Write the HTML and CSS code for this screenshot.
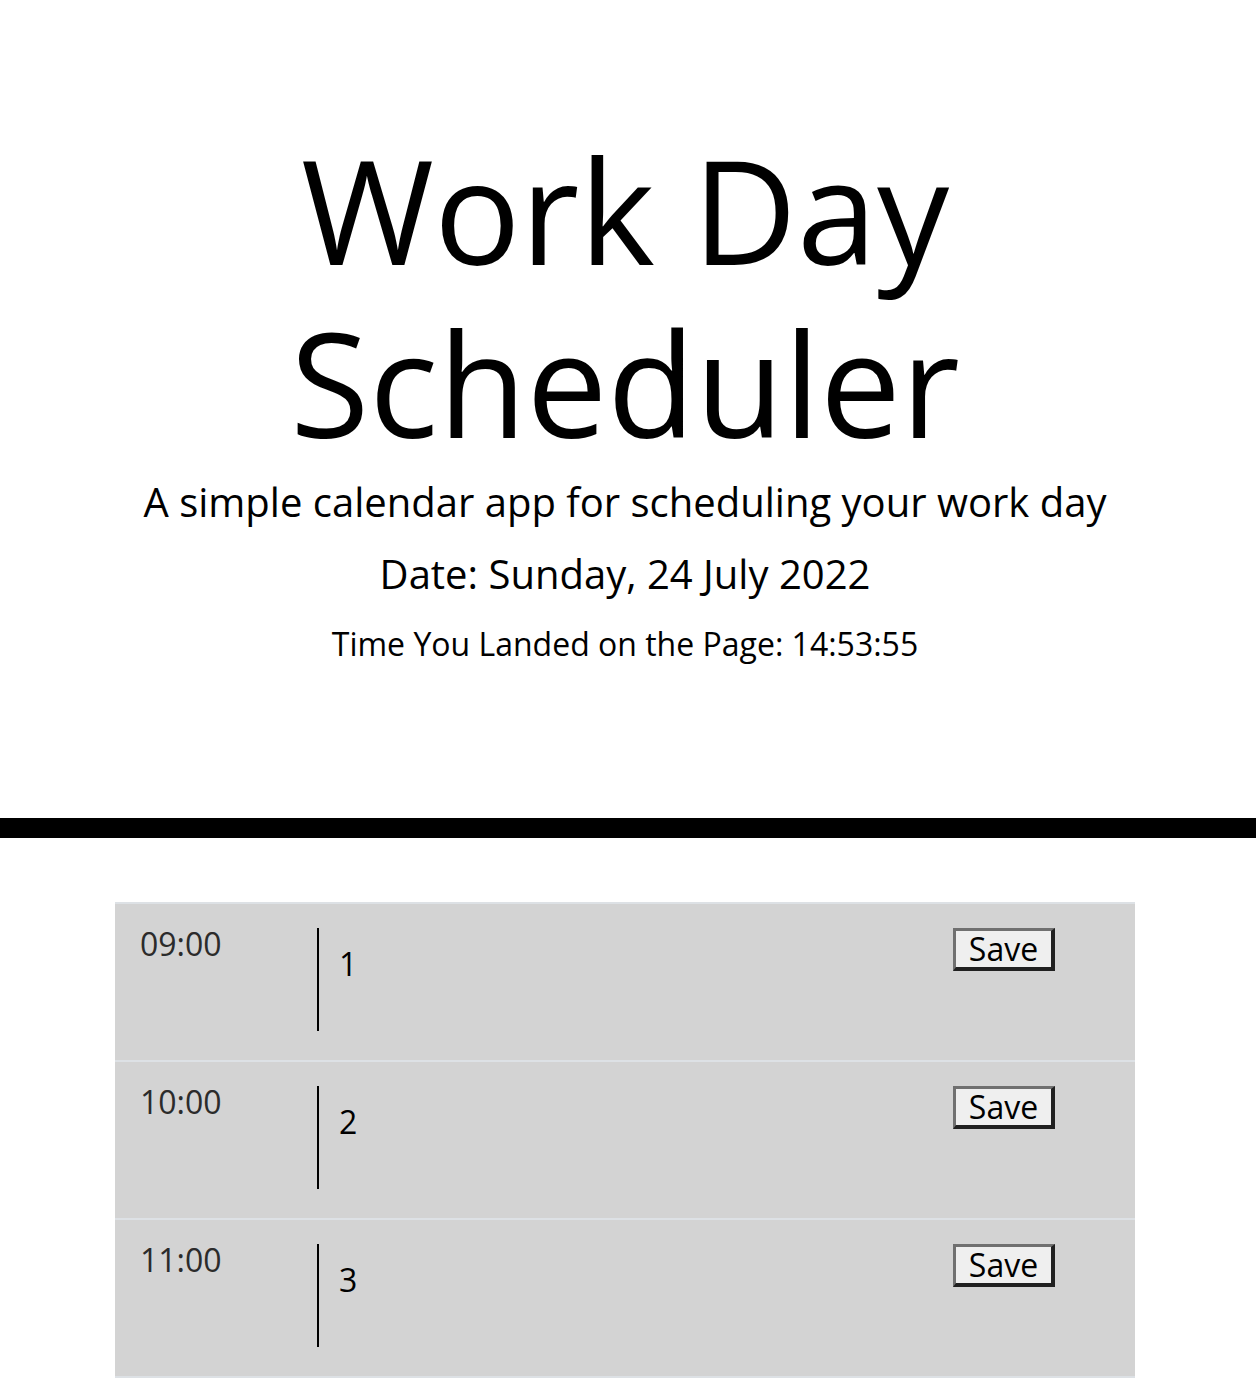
FILE: index.html
```html
<!DOCTYPE html>
<html lang="en">
<head>
<meta charset="utf-8">
<title>Work Day Scheduler</title>
<link rel="stylesheet" href="styles.css">
</head>
<body>
<header class="jumbotron">
  <h1 class="title">Work Day Scheduler</h1>
  <p class="lead">A simple calendar app for scheduling your work day</p>
  <p class="current-day">Date: Sunday, 24 July 2022</p>
  <p class="landed">Time You Landed on the Page: 14:53:55</p>
</header>
<main class="container">
  <div class="time-block">
    <div class="hour">09:00</div>
    <div class="description">1</div>
    <div class="save-col"><button class="saveBtn">Save</button></div>
  </div>
  <div class="time-block">
    <div class="hour">10:00</div>
    <div class="description">2</div>
    <div class="save-col"><button class="saveBtn">Save</button></div>
  </div>
  <div class="time-block last">
    <div class="hour">11:00</div>
    <div class="description">3</div>
    <div class="save-col"><button class="saveBtn">Save</button></div>
  </div>
</main>
</body>
</html>
```
FILE: styles.css
```css
html, body {
  margin: 0;
  padding: 0;
  background: #fff;
  font-family: "Open Sans", "Liberation Sans", sans-serif;
  color: #000;
}

.jumbotron {
  text-align: center;
  padding: 123px 6px 0 0;
  box-sizing: border-box;
  border-bottom: 20px solid #000;
  height: 838px;
}

.title {
  margin: 0;
  font-size: 144px;
  font-weight: 400;
  line-height: 1.2;
}

.lead {
  margin: 3px 0 0;
  font-size: 40px;
  line-height: 1.5;
}

.current-day {
  margin: 12px 0 0;
  font-size: 40px;
  line-height: 1.5;
}

.landed {
  margin: 16px 0 0;
  font-size: 32px;
  line-height: 1.5;
}

.container {
  margin: 64px 0 0 115px;
  width: 1020px;
}

.time-block {
  display: flex;
  height: 156px;
  background: #d3d3d3;
  border-top: 2px solid #dde1e5;
}

.time-block.last {
  border-bottom: 2px solid #dde1e5;
}

.hour {
  width: 177px;
  padding: 16px 0 0 25px;
  font-size: 32px;
  line-height: 1.5;
  color: #2b2b2b;
}

.description {
  width: 590px;
  height: 103px;
  margin-top: 24px;
  border-left: 2px solid #000;
  padding-left: 20px;
  padding-top: 12px;
  box-sizing: border-box;
  font-size: 32px;
  line-height: 1.5;
}

.save-col {
  padding-top: 24px;
  padding-left: 46px;
}

.saveBtn {
  width: 102px;
  height: 43px;
  box-sizing: border-box;
  background: #efefef;
  border-style: solid;
  border-width: 3px 4px 4px 3px;
  border-color: #707070 #202020 #202020 #707070;
  font-family: "Open Sans", "Liberation Sans", sans-serif;
  font-size: 32px;
  line-height: 1;
  padding: 0;
  color: #000;
}
```
